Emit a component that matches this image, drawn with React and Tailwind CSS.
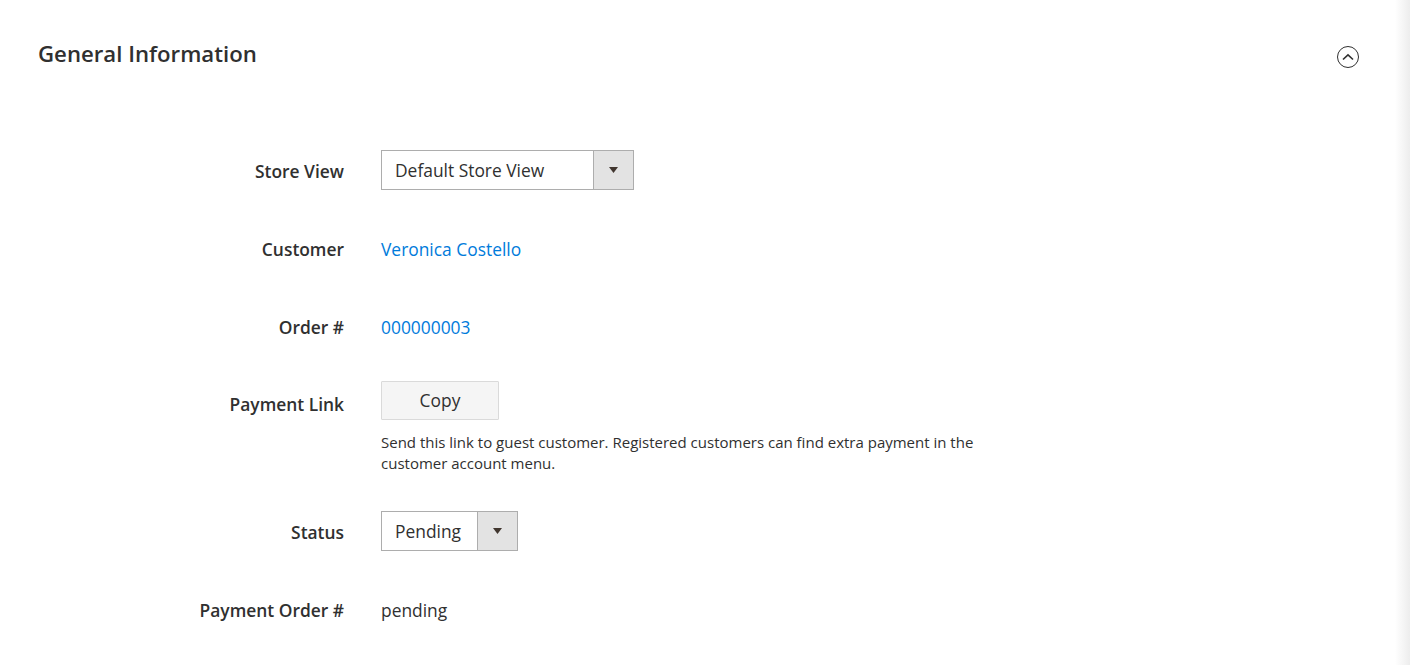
import React from "react";

const font = { fontFamily: '"Open Sans", "Noto Sans", Arial, sans-serif' };

function Select({ value, width }) {
  return (
    <div className={`flex h-[40px] border border-[#adadad] bg-white ${width}`}>
      <div className="flex-1 flex items-center pl-[13px] pt-[1px] text-[17.4px] text-[#303030]">{value}</div>
      <div className="w-[40px] flex items-center justify-center bg-[#e3e3e3] border-l border-[#adadad]">
        <svg width="9" height="6" viewBox="0 0 9 6"><path d="M0 0h9L4.5 6z" fill="#41362f" /></svg>
      </div>
    </div>
  );
}

function Row({ label, children, mb = "mb-[38px]", lpt = "pt-[1px]" }) {
  return (
    <div className={`flex items-start ${mb}`}>
      <div className={`w-[344px] h-[40px] shrink-0 text-right text-[17.4px] font-semibold text-[#303030] leading-[40px] ${lpt}`}>{label}</div>
      <div className="ml-[37px]">{children}</div>
    </div>
  );
}

export default function App() {
  return (
    <div style={font} className="relative w-[1410px] h-[665px] bg-white overflow-hidden">
      <div className="absolute right-0 top-0 h-full w-[15px] bg-gradient-to-r from-white to-[#ededed]" />
      <div className="flex items-center justify-between pl-[38px] pr-[51px] h-[108px]">
        <h2 className="text-[22.2px] font-semibold text-[#303030]">General Information</h2>
        <div className="w-[22px] h-[22px] rounded-full border-[1.5px] border-[#303030] flex items-center justify-center mt-[5px]">
          <svg width="12" height="8" viewBox="0 0 12 8"><path d="M1 6.5L6 1.8l5 4.7" fill="none" stroke="#303030" strokeWidth="1.6" /></svg>
        </div>
      </div>
      <div className="pt-[42px]">
        <Row label="Store View">
          <Select value="Default Store View" width="w-[253px]" />
        </Row>
        <Row label="Customer">
          <a className="block h-[40px] pt-[1px] text-[17.4px] text-[#007bdb] leading-[40px]">Veronica Costello</a>
        </Row>
        <Row label="Order #">
          <a className="block h-[40px] pt-[1px] text-[17.4px] text-[#007bdb] leading-[40px]">000000003</a>
        </Row>
        <Row label="Payment Link" mb="mb-[37px]" lpt="pt-0">
          <div className="-mt-[3px]">
            <button className="w-[118px] h-[39px] bg-[#f5f5f5] border border-[#dadada] rounded-[1px] text-[17.4px] text-[#303030]">Copy</button>
            <p className="mt-[12px] text-[15px] leading-[21px] text-[#303030] w-[620px]">
              Send this link to guest customer. Registered customers can find extra payment in the customer account menu.
            </p>
          </div>
        </Row>
        <Row label="Status">
          <Select value="Pending" width="w-[137px]" />
        </Row>
        <Row label="Payment Order #">
          <span className="block h-[40px] pt-[1px] text-[17.4px] text-[#303030] leading-[40px]">pending</span>
        </Row>
      </div>
    </div>
  );
}
